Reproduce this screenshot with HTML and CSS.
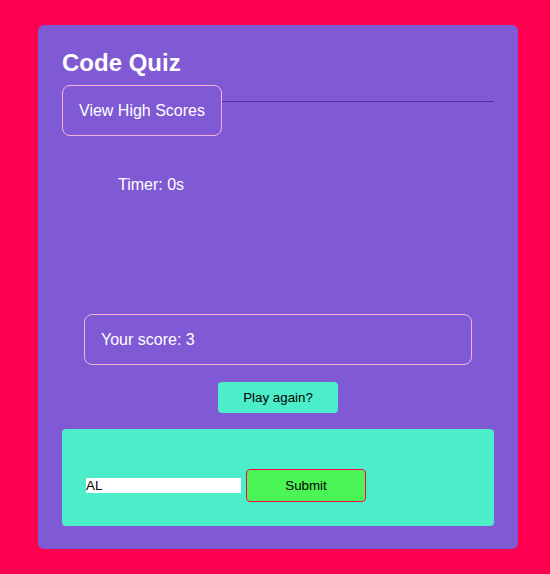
FILE: index.html
```html
<!DOCTYPE html>
<html>
<head>
<meta charset="utf-8">
<link rel="stylesheet" href="styles.css">
</head>
<body>
<main class="card">
  <h1 class="title">Code Quiz</h1>
  <div class="header-row">
    <button class="hs-btn">View High Scores</button>
    <span class="rule"></span>
  </div>
  <p class="timer">Timer: 0s</p>
  <div class="score-box">Your score: 3</div>
  <div class="again-row"><button class="again-btn">Play again?</button></div>
  <form class="entry">
    <input class="initials" type="text" value="AL">
    <button class="submit-btn" type="button">Submit</button>
  </form>
</main>
</body>
</html>
```
FILE: styles.css
```css
html, body { margin: 0; padding: 0; }
body {
  background: #ff0050;
  font-family: "Liberation Sans", Arial, sans-serif;
  width: 550px;
  height: 574px;
  padding-top: 25px;
  box-sizing: border-box;
}
.card {
  margin-left: 38px;
  width: 480px;
  height: 524px;
  box-sizing: border-box;
  background: #805ad5;
  border-radius: 6px;
  padding: 24px 24px 0 24px;
  display: flex;
  flex-direction: column;
}
.title {
  margin: 0;
  color: #fff;
  font-size: 24px;
  font-weight: bold;
  line-height: 28px;
  height: 36px;
}
.header-row {
  display: flex;
  align-items: flex-start;
}
.hs-btn {
  width: 160px;
  height: 51px;
  background: transparent;
  border: 1px solid #f5b3d8;
  border-radius: 8px;
  color: #fff;
  font-family: "Liberation Sans", Arial, sans-serif;
  font-size: 16px;
  padding: 0;
}
.rule {
  flex: 1;
  height: 1px;
  margin-top: 16px;
  background: #5b2aad;
}
.timer {
  margin: 39px 0 0 56px;
  color: #fff;
  font-size: 16px;
  line-height: 20px;
}
.score-box {
  margin: 119px 22px 0 22px;
  height: 51px;
  box-sizing: border-box;
  border: 1px solid #f5b3d8;
  border-radius: 8px;
  color: #fff;
  font-size: 16px;
  padding-left: 16px;
  display: flex;
  align-items: center;
}
.again-row {
  display: flex;
  justify-content: center;
  margin-top: 17px;
}
.again-btn {
  width: 120px;
  height: 31px;
  background: #4ceeca;
  border: none;
  border-radius: 4px;
  color: #000;
  font-family: "Liberation Sans", Arial, sans-serif;
  font-size: 13.33px;
  padding: 0;
}
.entry {
  margin-top: 16px;
  height: 97px;
  background: #4ceeca;
  border-radius: 4px;
  display: flex;
  align-items: center;
  padding: 16px 0 0 24px;
  box-sizing: border-box;
  gap: 5px;
}
.initials {
  width: 155px;
  height: 15px;
  border: none;
  padding: 0;
  margin: 0;
  background: #fff;
  font-family: "Liberation Sans", Arial, sans-serif;
  font-size: 13.33px;
  color: #000;
  outline: none;
}
.submit-btn {
  width: 120px;
  height: 33px;
  background: #4af555;
  border: 1px solid #ff0050;
  border-radius: 4px;
  color: #000;
  font-family: "Liberation Sans", Arial, sans-serif;
  font-size: 13.33px;
  padding: 0;
}
```
